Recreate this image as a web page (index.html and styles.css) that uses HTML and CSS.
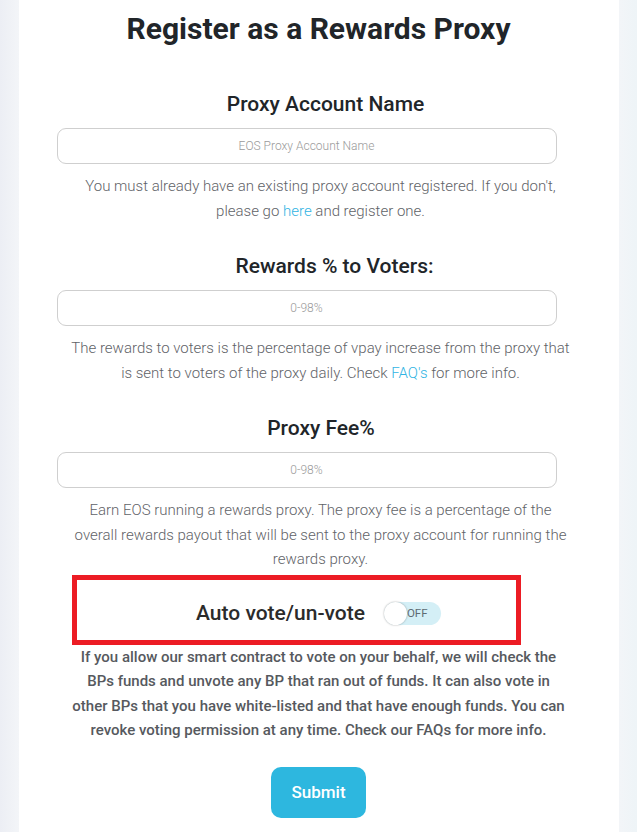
FILE: index.html
```html
<!DOCTYPE html>
<html>
<head>
<meta charset="utf-8">
<link rel="stylesheet" href="styles.css">
</head>
<body>
<div class="card">
  <h1 class="title">Register as a Rewards Proxy</h1>

  <div class="field first">
    <h2 class="label label-name">Proxy Account Name</h2>
    <div class="input"><span class="ph">EOS Proxy Account Name</span></div>
    <p class="help">You must already have an existing proxy account registered. If you don't, please go <a class="link">here</a> and register one.</p>
  </div>

  <div class="field">
    <h2 class="label label-rewards">Rewards % to Voters:</h2>
    <div class="input"><span class="ph">0-98%</span></div>
    <p class="help">The rewards to voters is the percentage of vpay increase from the proxy that is sent to voters of the proxy daily. Check <a class="link">FAQ's</a> for more info.</p>
  </div>

  <div class="field">
    <h2 class="label label-fee">Proxy Fee%</h2>
    <div class="input"><span class="ph">0-98%</span></div>
    <p class="help">Earn EOS running a rewards proxy. The proxy fee is a percentage of the overall rewards payout that will be sent to the proxy account for running the rewards proxy.</p>
  </div>

  <div class="autobox">
    <span class="autolabel">Auto vote/un-vote</span>
    <span class="toggle"><span class="knob"></span><span class="off">OFF</span></span>
  </div>
  <p class="note">If you allow our smart contract to vote on your behalf, we will check the BPs funds and unvote any BP that ran out of funds. It can also vote in other BPs that you have white-listed and that have enough funds. You can revoke voting permission at any time. Check our FAQs for more info.</p>

  <div class="actions"><button class="submit">Submit</button></div>
</div>
</body>
</html>
```

FILE: styles.css
```css
* { box-sizing: border-box; }
html, body { margin: 0; padding: 0; }
body {
  background: linear-gradient(90deg, #eceef4 0px, #f3f5f8 19px, #f3f5f8 618px, #eef4f7 637px);
  font-family: Roboto, "Noto Sans", sans-serif;
  height: 832px;
  overflow: hidden;
}
.card {
  width: 600px;
  margin: 0 auto;
  background: #fff;
  min-height: 832px;
  padding-top: 11px;
}
.title {
  margin: 0;
  font-size: 30px;
  line-height: 36px;
  font-weight: 700;
  color: #212529;
  text-align: center;
}
.field { width: 500px; margin-left: 38px; margin-top: 31px; }
.field.first { margin-top: 45px; }
.label {
  margin: 0;
  font-size: 21px;
  line-height: 24px;
  font-weight: 500;
  color: #212529;
  text-align: center;
}
.label-name { padding-left: 38px; }
.label-rewards { padding-left: 56px; }
.label-fee { padding-left: 29px; }
.input {
  margin-top: 12px;
  width: 500px;
  height: 36px;
  border: 1px solid #cfcfcf;
  border-radius: 9px;
  display: flex;
  align-items: center;
  justify-content: center;
}
.ph { font-size: 12px; color: #9a9a9a; font-weight: 300; }
.help {
  margin: 10px 0 0 14px;
  width: 500px;
  font-size: 15px;
  line-height: 24.5px;
  font-weight: 300;
  color: #5f6368;
  text-align: center;
}
.link { color: #31b4e3; text-decoration: none; }
.autobox {
  margin: 3px 0 0 53px;
  width: 449px;
  height: 70px;
  border: 5px solid #ec1c24;
  display: flex;
  align-items: center;
  justify-content: center;
  gap: 19px;
  padding-top: 7px;
  padding-left: 45px;
}
.autolabel { font-size: 21px; font-weight: 500; color: #2b2b2b; }
.toggle {
  position: relative;
  width: 57px;
  height: 23px;
  border-radius: 12px;
  background: #d4eff6;
  display: inline-block;
  flex: none;
}
.knob {
  position: absolute;
  left: 0; top: 0;
  width: 23px; height: 23px;
  border-radius: 50%;
  background: #fff;
  box-shadow: 0 0 2px rgba(0,0,0,0.35);
}
.off {
  position: absolute;
  left: 23px; top: 0;
  line-height: 23px;
  font-size: 11.5px;
  color: #5f6b72;
}
.note {
  margin: 0 auto;
  width: 500px;
  font-size: 15px;
  line-height: 24.5px;
  font-weight: 500;
  color: #56595e;
  text-align: center;
}
.actions { margin-top: 24px; text-align: center; }
.submit {
  width: 95px;
  height: 51px;
  border: none;
  border-radius: 10px;
  background: #2db7df;
  color: #fff;
  font-family: Roboto, sans-serif;
  font-size: 17px;
  font-weight: 500;
}
```
